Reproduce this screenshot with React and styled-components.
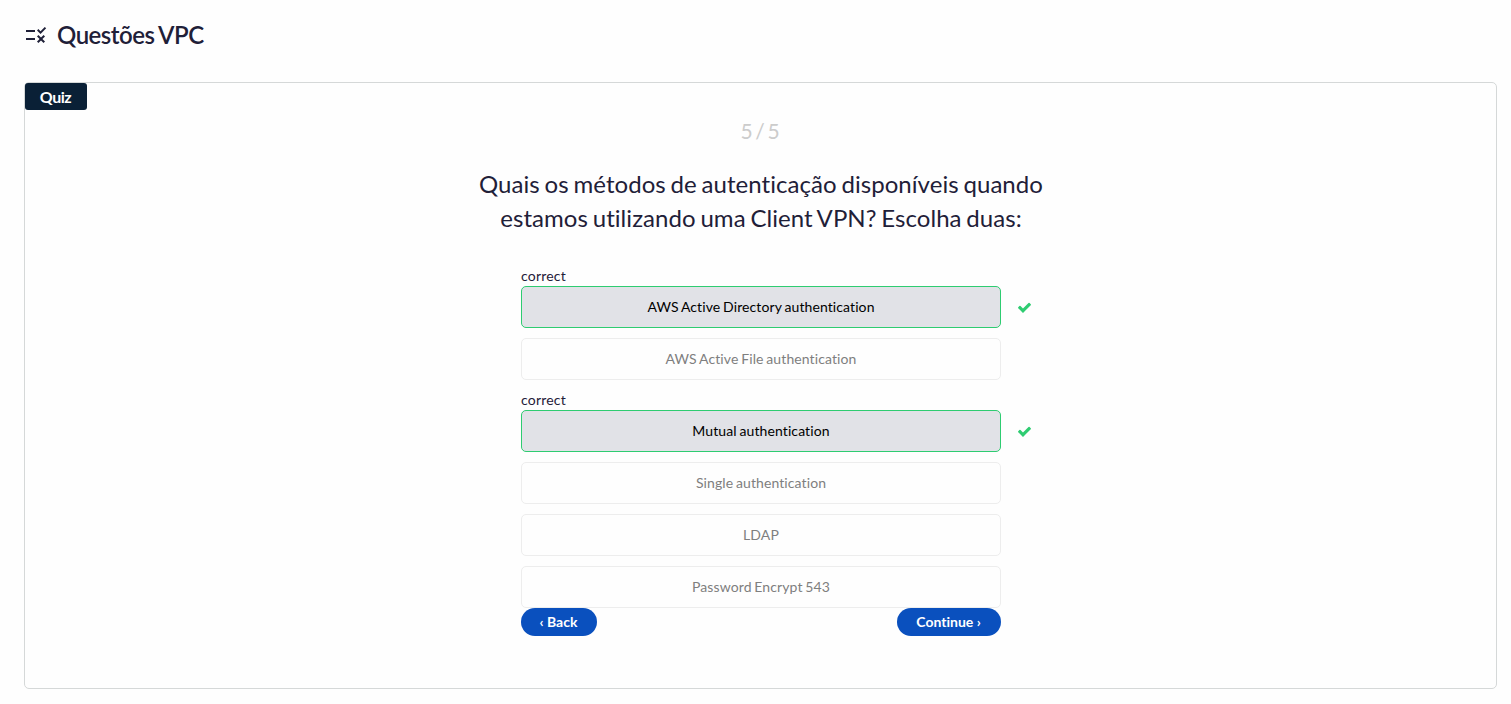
import React from 'react';
import styled, { createGlobalStyle } from 'styled-components';
import { MdRule } from 'react-icons/md';

const GlobalStyle = createGlobalStyle`
  *, *::before, *::after { box-sizing: border-box; }
  body {
    margin: 0;
    background: #fefefe;
    color: #1f2038;
    font-family: Lato, "Open Sans", sans-serif;
    font-size: 14px;
    font-variant-ligatures: none;
  }
`;

const Page = styled.main`
  padding: 16px 14px 15px 24px;
  height: 704px;
  display: flex;
  flex-direction: column;
`;

const Header = styled.header`
  display: flex;
  align-items: center;
  gap: 9px;
  height: 38px;
  margin-bottom: 28px;

  svg { flex: none; }
`;

const Title = styled.h1`
  margin: 0;
  font-size: 24px;
  line-height: 38px;
  font-weight: 600;
  letter-spacing: -0.5px;
  word-spacing: -1px;
`;

const Card = styled.section`
  flex: 1;
  position: relative;
  display: flex;
  flex-direction: column;
  align-items: center;
  padding: 33px 0 0 1px;
  border: 1px solid #d5d8d8;
  border-radius: 5px;
`;

const Tag = styled.span`
  position: absolute;
  top: 0;
  left: 0;
  width: 62px;
  height: 27px;
  border-radius: 3px;
  padding-right: 1px;
  background: #0a2036;
  color: #fff;
  font-size: 16px;
  line-height: 28px;
  font-weight: 700;
  letter-spacing: -0.5px;
  text-align: center;
`;

const Counter = styled.div`
  padding-right: 2px;
  color: #ccc;
  font-size: 21px;
  line-height: 30px;
  word-spacing: -2.4px;
  letter-spacing: -0.2px;
`;

const Question = styled.h2`
  width: 600px;
  margin: 21px 0 31px;
  font-size: 24px;
  line-height: 34px;
  font-weight: 400;
  letter-spacing: 0.05px;
  word-spacing: -1.4px;
  text-align: center;
`;

const Answers = styled.ul`
  width: 480px;
  margin: 0;
  padding: 0;
  list-style: none;
  display: flex;
  flex-direction: column;
  gap: 10px;
`;

const Answer = styled.li`
  display: flex;
  flex-direction: column;
`;

const Status = styled.span`
  height: 20px;
  line-height: 20px;
  letter-spacing: 0.2px;
`;

const Choice = styled.div`
  position: relative;
  height: 42px;
  padding-bottom: 1px;
  display: flex;
  align-items: center;
  justify-content: center;
  border: 1px solid ${(p) => (p.$correct ? '#2ecc71' : '#ededed')};
  border-radius: 5px;
  background: ${(p) => (p.$correct ? '#e1e2e7' : 'transparent')};
  color: ${(p) => (p.$correct ? '#000' : '#7f7f7f')};
  line-height: 20px;
  letter-spacing: 0.1px;
  word-spacing: -0.9px;
`;

const Check = styled.svg`
  position: absolute;
  left: 495px;
  top: 13px;
  width: 15px;
  height: 15px;
  fill: #2ecc71;
`;

const Actions = styled.div`
  width: 480px;
  display: flex;
  justify-content: space-between;
`;

const Button = styled.button`
  width: ${(p) => p.$width}px;
  height: 28px;
  padding: 0 1px 0 0;
  border: 0;
  border-radius: 14px;
  background: #0a50be;
  color: #fff;
  font: 700 14px/28px Lato, sans-serif;
  font-variant-ligatures: none;
`;

const answers = [
  { text: 'AWS Active Directory authentication', correct: true },
  { text: 'AWS Active File authentication' },
  { text: 'Mutual authentication', correct: true },
  { text: 'Single authentication' },
  { text: 'LDAP' },
  { text: 'Password Encrypt 543' },
];

export default function App() {
  return (
    <Page>
      <GlobalStyle />
      <Header>
        <MdRule size={24} />
        <Title>Questões VPC</Title>
      </Header>
      <Card>
        <Tag>Quiz</Tag>
        <Counter>5 / 5</Counter>
        <Question>
          Quais os métodos de autenticação disponíveis quando estamos utilizando uma Client VPN? Escolha duas:
        </Question>
        <Answers>
          {answers.map(({ text, correct }) => (
            <Answer key={text}>
              {correct && <Status>correct</Status>}
              <Choice $correct={correct}>
                {text}
                {correct && (
                  <Check viewBox="0 0 1792 1792">
                    <path d="M1671 566q0 40-28 68l-724 724-136 136q-28 28-68 28t-68-28l-136-136-362-362q-28-28-28-68t28-68l136-136q28-28 68-28t68 28l294 295 656-657q28-28 68-28t68 28l136 136q28 28 28 68z" />
                  </Check>
                )}
              </Choice>
            </Answer>
          ))}
        </Answers>
        <Actions>
          <Button $width={76}>‹ Back</Button>
          <Button $width={104}>Continue ›</Button>
        </Actions>
      </Card>
    </Page>
  );
}
